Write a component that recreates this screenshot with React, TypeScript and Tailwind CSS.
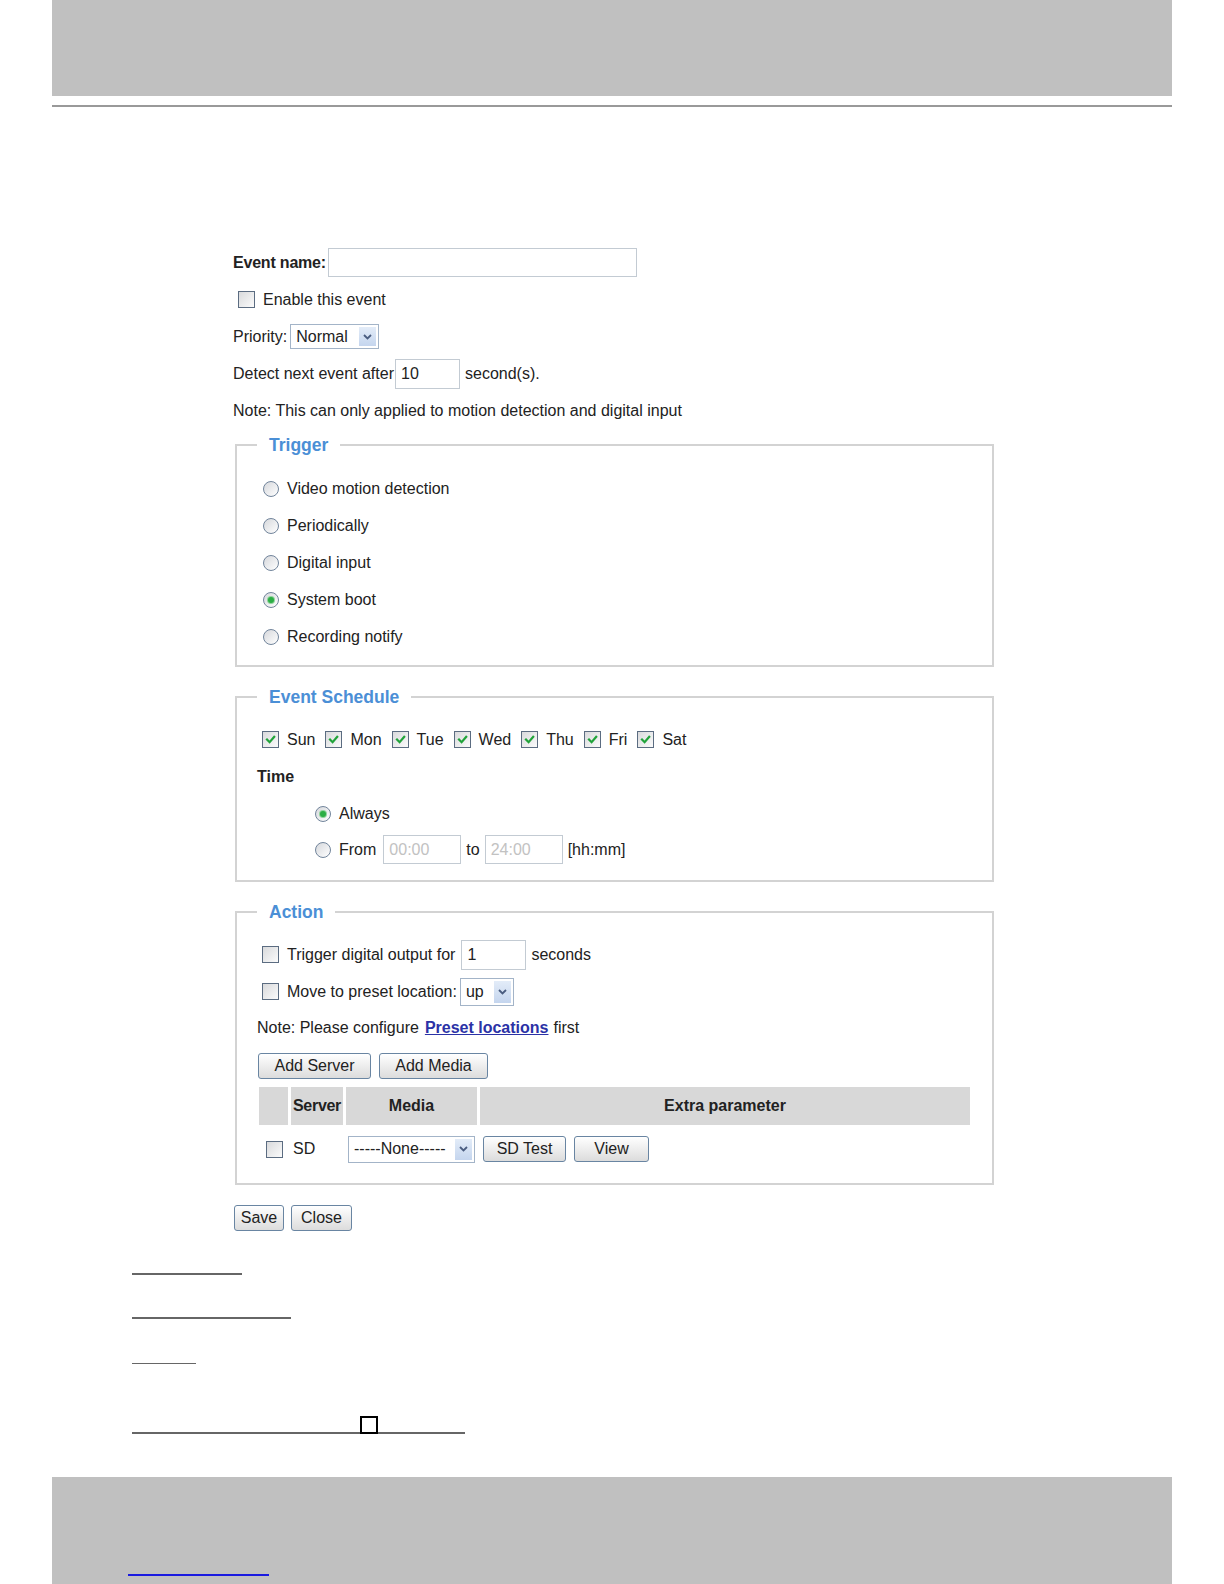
import React from 'react'

const Checkbox = ({ checked }: { checked?: boolean }) => (
  <span className="inline-flex h-[17px] w-[17px] shrink-0 items-center justify-center border border-[#5b6c81] bg-linear-to-br from-[#d9dadc] to-[#fbfbfb]">
    {checked && (
      <svg width="11" height="11" viewBox="0 0 11 11">
        <path d="M2 5.5 L4.6 8.2 L9.2 2.8" stroke="#21a33a" strokeWidth="2.2" fill="none" strokeLinecap="square" />
      </svg>
    )}
  </span>
)

const Radio = ({ checked }: { checked?: boolean }) => (
  <span className="inline-flex h-[16px] w-[16px] shrink-0 items-center justify-center rounded-full border border-[#71849b] bg-linear-to-br from-[#d6d8dc] to-white">
    {checked && <span className="h-[6px] w-[6px] rounded-full bg-[#2cae45] ring-1 ring-[#8fd39b]" />}
  </span>
)

const Chevron = () => (
  <svg width="9" height="6" viewBox="0 0 9 6">
    <path d="M1 1 L4.5 4.5 L8 1" stroke="#4a5d80" strokeWidth="1.8" fill="none" />
  </svg>
)

const Select = ({ label, className }: { label: string; className: string }) => (
  <span className={`inline-flex shrink-0 items-center border border-[#a3b4c8] bg-white pl-[5px] ${className}`}>
    <span className="whitespace-nowrap">{label}</span>
    <span className="ml-auto mr-[2px] flex h-[calc(100%-4px)] w-[17px] items-center justify-center bg-linear-to-b from-[#e3ecf8] to-[#c4d5ee]">
      <Chevron />
    </span>
  </span>
)

const TextBox = ({ value, className, disabled }: { value?: string; className: string; disabled?: boolean }) => (
  <span
    className={`inline-flex shrink-0 items-center border border-[#c3cbd3] bg-white pl-[5px] ${disabled ? 'text-[#c2c2c2]' : ''} ${className}`}
  >
    {value}
  </span>
)

const Button = ({ label, className }: { label: string; className: string }) => (
  <span
    className={`inline-flex h-[26px] shrink-0 items-center justify-center rounded-[3px] border border-[#6985a2] bg-linear-to-b from-white to-[#dcdcdc] ${className}`}
  >
    {label}
  </span>
)

const Fieldset = ({ title, children, className }: { title: string; children: React.ReactNode; className?: string }) => (
  <fieldset className={`ml-[2px] w-[759px] border-2 border-[#d3d3d3] ${className ?? ''}`}>
    <legend className="ml-[20px] px-[12px] text-[17.5px] font-bold leading-[24px] text-[#4b8fd6]">{title}</legend>
    {children}
  </fieldset>
)

const days = ['Sun', 'Mon', 'Tue', 'Wed', 'Thu', 'Fri', 'Sat']
const triggers = ['Video motion detection', 'Periodically', 'Digital input', 'System boot', 'Recording notify']

export default function App() {
  return (
    <div className="relative w-[1224px] bg-white font-['Liberation_Sans',Arial,sans-serif] text-[16px] text-[#222]">
      {/* page header */}
      <div className="ml-[52px] h-[96px] w-[1120px] bg-[#c0c0c0]" />
      <div className="ml-[52px] mt-[9px] h-[2px] w-[1120px] bg-[#999]" />

      <div className="ml-[233px] mt-[137px]">
        <div className="flex h-[37px] items-center">
          <span className="font-bold tracking-[-0.2px]">Event name:</span>
          <TextBox className="ml-[2px] h-[29px] w-[309px]" />
        </div>
        <div className="flex h-[37px] items-center pl-[5px]">
          <Checkbox />
          <span className="ml-[8px]">Enable this event</span>
        </div>
        <div className="flex h-[37px] items-center">
          <span>Priority:</span>
          <Select label="Normal" className="ml-[3px] h-[25px] w-[89px]" />
        </div>
        <div className="flex h-[37px] items-center">
          <span>Detect next event after</span>
          <TextBox value="10" className="ml-[1px] h-[30px] w-[65px]" />
          <span className="ml-[5px]">second(s).</span>
        </div>
        <div className="flex h-[37px] items-center">Note: This can only applied to motion detection and digital input</div>

        {/* Trigger */}
        <Fieldset title="Trigger" className="mt-[4px]">
          <div className="pb-[10px] pl-[20px] pt-[13px]">
            {triggers.map((t) => (
              <div key={t} className="flex h-[37px] items-center pl-[6px]">
                <Radio checked={t === 'System boot'} />
                <span className="ml-[8px]">{t}</span>
              </div>
            ))}
          </div>
        </Fieldset>

        {/* Event Schedule */}
        <Fieldset title="Event Schedule" className="mt-[18px]">
          <div className="pb-[13px] pl-[20px] pt-[12px]">
            <div className="flex h-[37px] items-center gap-[10px] pl-[5px]">
              {days.map((d) => (
                <span key={d} className="flex items-center gap-[8px]">
                  <Checkbox checked />
                  <span>{d}</span>
                </span>
              ))}
            </div>
            <div className="flex h-[37px] items-center font-bold">Time</div>
            <div className="flex h-[37px] items-center pl-[58px]">
              <Radio checked />
              <span className="ml-[8px]">Always</span>
            </div>
            <div className="flex h-[35px] items-center pl-[58px]">
              <Radio />
              <span className="ml-[8px]">From</span>
              <TextBox value="00:00" disabled className="ml-[7px] h-[29px] w-[78px]" />
              <span className="ml-[5px]">to</span>
              <TextBox value="24:00" disabled className="ml-[5px] h-[29px] w-[78px]" />
              <span className="ml-[5px]">[hh:mm]</span>
            </div>
          </div>
        </Fieldset>

        {/* Action */}
        <Fieldset title="Action" className="mt-[18px]">
          <div className="pb-[10px] pl-[20px] pt-[12px]">
            <div className="flex h-[37px] items-center pl-[5px]">
              <Checkbox />
              <span className="ml-[8px]">Trigger digital output for</span>
              <TextBox value="1" className="ml-[6px] h-[30px] w-[65px]" />
              <span className="ml-[5px]">seconds</span>
            </div>
            <div className="flex h-[37px] items-center pl-[5px]">
              <Checkbox />
              <span className="ml-[8px]">Move to preset location:</span>
              <Select label="up" className="ml-[3px] h-[28px] w-[54px]" />
            </div>
            <div className="flex h-[36px] items-center">
              <span>Note: Please configure</span>
              <span className="ml-[6px] font-bold text-[#2b32a6] underline">Preset locations</span>
              <span className="ml-[5px]">first</span>
            </div>
            <div className="mt-[7px] flex gap-[8px] pl-[1px]">
              <Button label="Add Server" className="w-[113px]" />
              <Button label="Add Media" className="w-[109px]" />
            </div>

            <div className="mt-[8px] flex h-[38px] gap-[3px] pl-[2px] font-bold">
              <div className="w-[29px] bg-[#d8d8d8]" />
              <div className="flex w-[52px] items-center justify-center bg-[#d8d8d8] tracking-[-0.3px]">Server</div>
              <div className="flex w-[131px] items-center justify-center bg-[#d8d8d8]">Media</div>
              <div className="flex w-[490px] items-center justify-center bg-[#d8d8d8]">Extra parameter</div>
            </div>
            <div className="flex h-[48px] items-center gap-[3px] pl-[2px]">
              <div className="flex w-[29px] items-center pl-[7px]">
                <Checkbox />
              </div>
              <div className="w-[52px] pl-[2px]">SD</div>
              <div className="flex w-[131px] items-center pl-[2px]">
                <Select label="-----None-----" className="h-[27px] w-[127px]" />
              </div>
              <div className="flex w-[490px] items-center gap-[8px] pl-[3px]">
                <Button label="SD Test" className="w-[83px]" />
                <Button label="View" className="w-[75px]" />
              </div>
            </div>
          </div>
        </Fieldset>

        <div className="ml-[1px] mt-[20px] flex gap-[7px]">
          <Button label="Save" className="w-[50px]" />
          <Button label="Close" className="w-[61px]" />
        </div>
      </div>

      {/* rules */}
      <div className="ml-[132px] mt-[42px] h-[2px] w-[110px] bg-[#666]" />
      <div className="ml-[132px] mt-[42px] h-[2px] w-[159px] bg-[#666]" />
      <div className="ml-[132px] mt-[44px] h-[1px] w-[64px] bg-[#666]" />
      <div className="ml-[132px] mt-[52px] flex items-end">
        <div className="h-[2px] w-[228px] bg-[#666]" />
        <div className="h-[18px] w-[18px] border-2 border-black bg-white" />
        <div className="h-[2px] w-[87px] bg-[#666]" />
      </div>

      {/* page footer */}
      <div className="ml-[52px] mt-[43px] h-[108px] w-[1120px] bg-[#c0c0c0] pt-[97px]">
        <div className="ml-[76px] h-[2px] w-[141px] bg-[#1a1ae0]" />
      </div>
    </div>
  )
}
